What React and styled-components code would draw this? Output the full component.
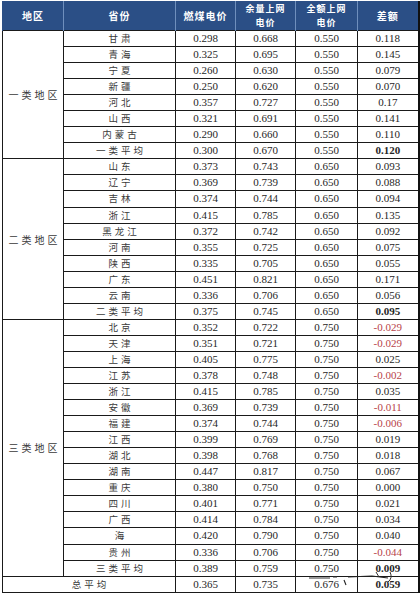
import styled, { createGlobalStyle } from "styled-components";

const GlobalStyle = createGlobalStyle`
  html, body {
    margin: 0;
    padding: 0;
    background: #ffffff;
  }
`;

const Page = styled.div`
  position: relative;
  width: 420px;
  height: 594px;
  padding: 1px 0 0 2px;
  box-sizing: border-box;
  overflow: hidden;
  background: #fff;
`;

const Table = styled.table`
  width: 416px;
  height: 592px;
  border-collapse: collapse;
  table-layout: fixed;
  border-right: 2px solid #111;
  font-family: "Liberation Serif", "Noto Sans CJK SC", serif;
`;

const HeadCell = styled.th`
  background: #2b4f86;
  color: #fff;
  height: 29px;
  padding: 0;
  font-family: "Noto Sans CJK SC", sans-serif;
  font-size: 10px;
  font-weight: 700;
  line-height: 13px;
  letter-spacing: 1px;
  text-align: center;
  border-left: 1px solid #6f8fbd;
  &:first-child {
    border-left: 1px solid #2b4f86;
  }
`;

const HeadLine = styled.span`
  display: block;
  font-size: 9px;
  line-height: 13.5px;
`;

const Row = styled.tr``;

const Cell = styled.td`
  border: 1px solid #1a1a1a;
  padding: 0;
  text-align: center;
  vertical-align: middle;
  font-size: 11px;
  line-height: 13px;
  color: ${({ $neg }) => ($neg ? "#b8444a" : "#262626")};
  font-weight: ${({ $bold }) => ($bold ? 700 : 400)};
  white-space: nowrap;
  overflow: hidden;
`;

const NameCell = styled(Cell)`
  font-family: "Noto Sans CJK SC", sans-serif;
  font-size: 9.5px;
  letter-spacing: 3px;
  color: #3a3a3a;
  padding-left: 3px;
`;

const RegionCell = styled(NameCell)`
  font-size: 10px;
  letter-spacing: 3px;
`;

const Scribble = styled.svg`
  position: absolute;
  left: 300px;
  top: 566px;
  width: 110px;
  height: 22px;
  pointer-events: none;
`;

const groups = [
  {
    region: "一类地区",
    rows: [
      ["甘肃", "0.298", "0.668", "0.550", "0.118"],
      ["青海", "0.325", "0.695", "0.550", "0.145"],
      ["宁夏", "0.260", "0.630", "0.550", "0.079"],
      ["新疆", "0.250", "0.620", "0.550", "0.070"],
      ["河北", "0.357", "0.727", "0.550", "0.17"],
      ["山西", "0.321", "0.691", "0.550", "0.141"],
      ["内蒙古", "0.290", "0.660", "0.550", "0.110"],
      ["一类平均", "0.300", "0.670", "0.550", "0.120", true],
    ],
  },
  {
    region: "二类地区",
    rows: [
      ["山东", "0.373", "0.743", "0.650", "0.093"],
      ["辽宁", "0.369", "0.739", "0.650", "0.088"],
      ["吉林", "0.374", "0.744", "0.650", "0.094"],
      ["浙江", "0.415", "0.785", "0.650", "0.135"],
      ["黑龙江", "0.372", "0.742", "0.650", "0.092"],
      ["河南", "0.355", "0.725", "0.650", "0.075"],
      ["陕西", "0.335", "0.705", "0.650", "0.055"],
      ["广东", "0.451", "0.821", "0.650", "0.171"],
      ["云南", "0.336", "0.706", "0.650", "0.056"],
      ["二类平均", "0.375", "0.745", "0.650", "0.095", true],
    ],
  },
  {
    region: "三类地区",
    rows: [
      ["北京", "0.352", "0.722", "0.750", "-0.029"],
      ["天津", "0.351", "0.721", "0.750", "-0.029"],
      ["上海", "0.405", "0.775", "0.750", "0.025"],
      ["江苏", "0.378", "0.748", "0.750", "-0.002"],
      ["浙江", "0.415", "0.785", "0.750", "0.035"],
      ["安徽", "0.369", "0.739", "0.750", "-0.011"],
      ["福建", "0.374", "0.744", "0.750", "-0.006"],
      ["江西", "0.399", "0.769", "0.750", "0.019"],
      ["湖北", "0.398", "0.768", "0.750", "0.018"],
      ["湖南", "0.447", "0.817", "0.750", "0.067"],
      ["重庆", "0.380", "0.750", "0.750", "0.000"],
      ["四川", "0.401", "0.771", "0.750", "0.021"],
      ["广西", "0.414", "0.784", "0.750", "0.034"],
      ["海", "0.420", "0.790", "0.750", "0.040"],
      ["贵州", "0.336", "0.706", "0.750", "-0.044"],
      ["三类平均", "0.389", "0.759", "0.750", "0.009", true],
    ],
  },
];

function App() {
  return (
    <Page>
      <GlobalStyle />
      <Table>
        <colgroup>
          <col style={{ width: 61 }} />
          <col style={{ width: 112 }} />
          <col style={{ width: 60 }} />
          <col style={{ width: 60 }} />
          <col style={{ width: 62 }} />
          <col style={{ width: 61 }} />
        </colgroup>
        <thead>
          <tr>
            <HeadCell>地区</HeadCell>
            <HeadCell>省份</HeadCell>
            <HeadCell>燃煤电价</HeadCell>
            <HeadCell>
              <HeadLine>余量上网</HeadLine>
              <HeadLine>电价</HeadLine>
            </HeadCell>
            <HeadCell>
              <HeadLine>全额上网</HeadLine>
              <HeadLine>电价</HeadLine>
            </HeadCell>
            <HeadCell>差额</HeadCell>
          </tr>
        </thead>
        <tbody>
          {groups.map((g) =>
            g.rows.map((r, i) => (
              <Row key={g.region + r[0]}>
                {i === 0 && <RegionCell rowSpan={g.rows.length}>{g.region}</RegionCell>}
                <NameCell>{r[0]}</NameCell>
                <Cell>{r[1]}</Cell>
                <Cell>{r[2]}</Cell>
                <Cell>{r[3]}</Cell>
                <Cell $bold={r[5]} $neg={r[4].startsWith("-")}>{r[4]}</Cell>
              </Row>
            ))
          )}
          <Row>
            <NameCell colSpan={2}>总平均</NameCell>
            <Cell>0.365</Cell>
            <Cell>0.735</Cell>
            <Cell>0.676</Cell>
            <Cell $bold>0.059</Cell>
          </Row>
        </tbody>
      </Table>
      {/* stray pen marks over the last rows of the scan */}
      <Scribble viewBox="0 0 110 22">
        <path d="M9 12 L30 12 M33 11 L37 11" stroke="#333" strokeWidth="1" fill="none" />
        <path d="M44 14 L46 19 M48 11 L72 10 L88 12" stroke="#222" strokeWidth="1.1" fill="none" />
        <path d="M76 6 L79 11 M90 6 Q93 12 88 16" stroke="#333" strokeWidth="1" fill="none" />
      </Scribble>
    </Page>
  );
}

export default App;
